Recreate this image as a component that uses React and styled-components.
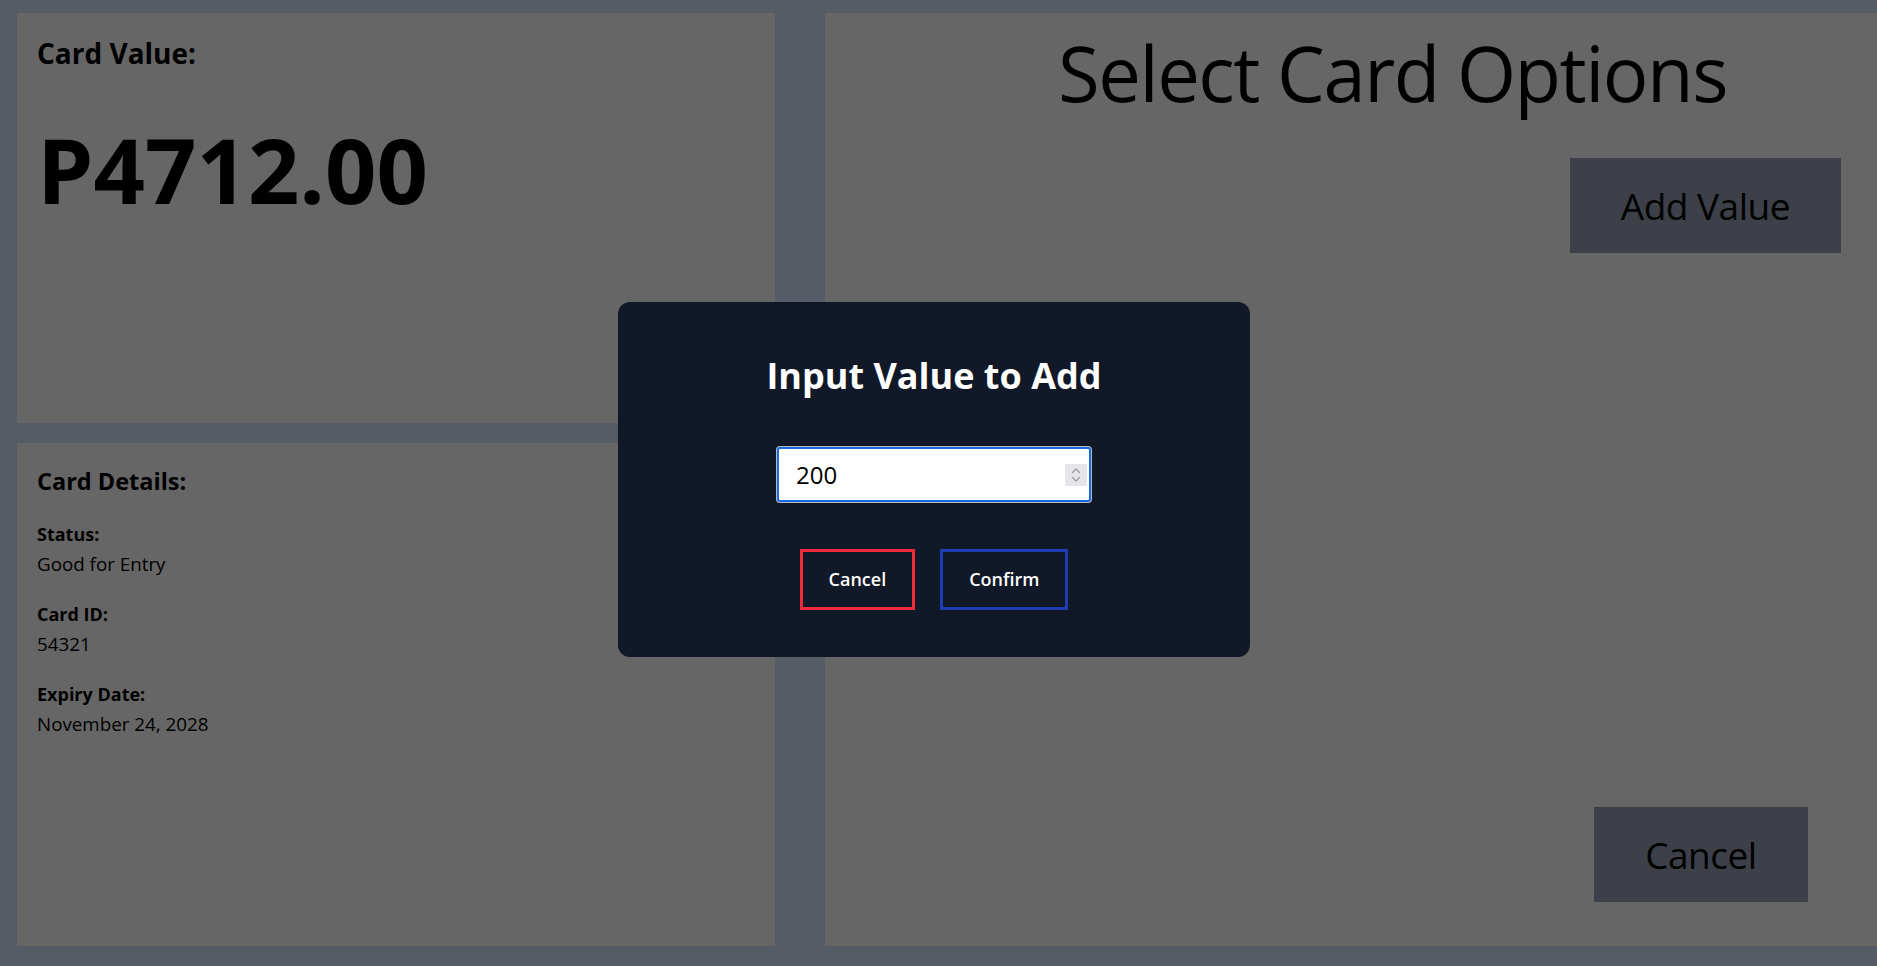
import styled, { createGlobalStyle } from "styled-components";

const GlobalStyle = createGlobalStyle`
  * {
    box-sizing: border-box;
  }

  html,
  body {
    margin: 0;
    height: 100%;
    overflow: hidden;
  }

  body {
    font-family: "Open Sans", "Noto Sans", sans-serif;
    background: #aab8cc;
    color: #000;
  }
`;

const card = {
  value: "P4712.00",
  details: [
    { label: "Status:", value: "Good for Entry" },
    { label: "Card ID:", value: "54321" },
    { label: "Expiry Date:", value: "November 24, 2028" },
  ],
};

const App = () => {
  return (
    <>
      <GlobalStyle />
      <Page>
        <Panel>
          <PanelLabel>Card Value:</PanelLabel>
          <Amount>{card.value}</Amount>
        </Panel>

        <Panel>
          <DetailsHeading>Card Details:</DetailsHeading>
          {card.details.map((item) => (
            <DetailGroup key={item.label}>
              <DetailLabel>{item.label}</DetailLabel>
              <DetailValue>{item.value}</DetailValue>
            </DetailGroup>
          ))}
        </Panel>

        <OptionsPanel>
          <OptionsTitle>Select Card Options</OptionsTitle>
          <Actions>
            <OptionButton>Add Value</OptionButton>
            <OptionButton>Cancel</OptionButton>
          </Actions>
        </OptionsPanel>
      </Page>

      <Overlay>
        <Modal>
          <ModalTitle>Input Value to Add</ModalTitle>
          <InputWrap>
            <ValueInput type="number" defaultValue="200" autoFocus />
            <Spinner>
              <svg width="12" height="18" viewBox="0 0 12 18" fill="none">
                <path
                  d="M2.5 6.5 6 3l3.5 3.5M2.5 11.5 6 15l3.5-3.5"
                  stroke="#9a9aa2"
                  strokeWidth="1.3"
                  strokeLinecap="round"
                  strokeLinejoin="round"
                />
              </svg>
            </Spinner>
          </InputWrap>
          <ButtonRow>
            <ModalButton $tone="danger">Cancel</ModalButton>
            <ModalButton $tone="primary">Confirm</ModalButton>
          </ButtonRow>
        </Modal>
      </Overlay>
    </>
  );
};

const Page = styled.div`
  display: grid;
  grid-template-columns: 758px 1135px;
  grid-template-rows: 410px 503px;
  column-gap: 50px;
  row-gap: 20px;
  width: max-content;
  height: 100vh;
  padding: 13px 0 20px 17px;
`;

const Panel = styled.section`
  background: #cccccc;
  padding: 22px 20px;
`;

const PanelLabel = styled.h2`
  margin: 0;
  font-size: 28px;
  font-weight: 700;
  line-height: 36px;
`;

const Amount = styled.p`
  margin: 50px 0 0;
  font-size: 90px;
  font-weight: 700;
  line-height: 96px;
`;

const DetailsHeading = styled.h2`
  margin: 0 0 22px;
  font-size: 23.5px;
  font-weight: 700;
  line-height: 32px;
`;

const DetailGroup = styled.div`
  margin-bottom: 20px;
`;

const DetailLabel = styled.h3`
  margin: 0;
  font-size: 18px;
  font-weight: 700;
  line-height: 30px;
`;

const DetailValue = styled.p`
  margin: 0;
  font-size: 18.8px;
  font-weight: 400;
  line-height: 30px;
`;

const OptionsPanel = styled.section`
  grid-column: 2;
  grid-row: 1 / span 2;
  display: flex;
  flex-direction: column;
  align-items: center;
  background: #cccccc;
  padding: 14px 0 44px;
`;

const OptionsTitle = styled.h1`
  margin: 0;
  font-size: 76px;
  font-weight: 400;
  line-height: 91px;
  letter-spacing: -1.5px;
`;

const Actions = styled.div`
  flex: 1;
  align-self: flex-end;
  display: flex;
  flex-direction: column;
  align-items: center;
  justify-content: space-between;
  margin: 40px 119px 0 0;

  & > :last-child {
    margin-right: 9px;
  }
`;

const OptionButton = styled.button`
  border: none;
  background: #7a8092;
  color: #000;
  font-family: inherit;
  font-size: 37px;
  font-weight: 400;
  line-height: 51px;
  letter-spacing: -0.5px;
  padding: 22px 51px;
  cursor: pointer;
`;

const Overlay = styled.div`
  position: fixed;
  inset: 0;
  display: flex;
  align-items: center;
  justify-content: center;
  padding: 0 9px 7px 0;
  background: rgba(0, 0, 0, 0.5);
`;

const Modal = styled.div`
  width: 632px;
  display: flex;
  flex-direction: column;
  align-items: center;
  background: #111827;
  border-radius: 12px;
  padding: 52px 48px 47px;
`;

const ModalTitle = styled.h2`
  margin: 0;
  color: #fff;
  font-size: 36px;
  font-weight: 700;
  line-height: 44px;
`;

const InputWrap = styled.div`
  position: relative;
  width: 314px;
  margin-top: 49px;
`;

const ValueInput = styled.input`
  width: 100%;
  height: 55px;
  padding: 0 40px 0 17px;
  border: 2px solid #1769e0;
  border-radius: 3px;
  box-shadow: 0 0 0 1px rgba(255, 255, 255, 0.7);
  outline: none;
  background: #fff;
  color: #000;
  caret-color: #000;
  font-family: inherit;
  font-size: 24px;
  -moz-appearance: textfield;

  &::-webkit-inner-spin-button,
  &::-webkit-outer-spin-button {
    -webkit-appearance: none;
    margin: 0;
  }
`;

const Spinner = styled.span`
  position: absolute;
  top: 17px;
  right: 4px;
  width: 22px;
  height: 22px;
  display: flex;
  align-items: center;
  justify-content: center;
  background: #e6e6ea;
  pointer-events: none;
`;

const ButtonRow = styled.div`
  display: flex;
  gap: 25px;
  margin-top: 47px;
`;

const ModalButton = styled.button`
  background: transparent;
  border: 3px solid
    ${({ $tone }) => ($tone === "danger" ? "#f22b3c" : "#1d3fb3")};
  color: #fff;
  font-family: inherit;
  font-size: 18px;
  font-weight: 600;
  line-height: 25px;
  padding: 15px 26px;
  cursor: pointer;
`;

export default App;
